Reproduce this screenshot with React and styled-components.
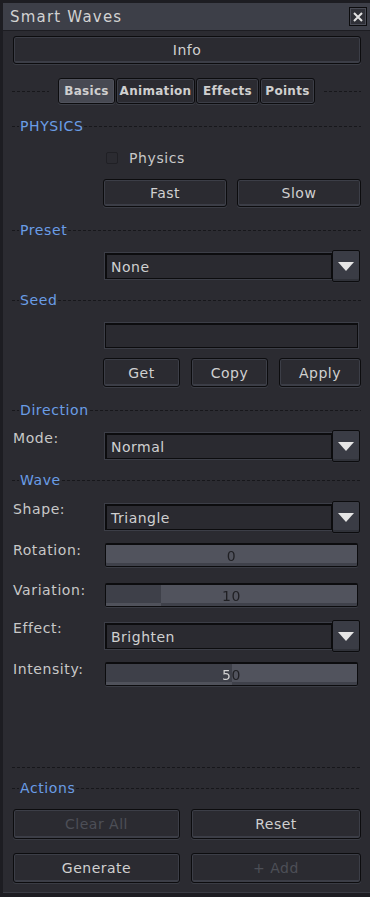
import styled, { createGlobalStyle } from 'styled-components';

const Global = createGlobalStyle`
  html, body {
    margin: 0;
    padding: 0;
    background: #1d1d22;
  }
  * { box-sizing: border-box; }
`;

const Window = styled.div`
  width: 370px;
  height: 897px;
  display: flex;
  flex-direction: column;
  background: #2b2b31;
  border-top: 3px solid #1d1d22;
  border-left: 3px solid #1d1d22;
  border-bottom: 4px solid #1d1d22;
  font-family: "DejaVu Sans", sans-serif;
  color: #cacaca;
  overflow: hidden;
`;

const TitleBar = styled.div`
  height: 28px;
  flex: none;
  display: flex;
  align-items: center;
  justify-content: space-between;
  padding: 0 3px 0 7px;
  background: #3d3f48;
  border-bottom: 1px solid #1d1d22;
`;

const Title = styled.span`
  font-size: 15px;
  letter-spacing: 1.2px;
  color: #d2d2d2;
`;

const Close = styled.button`
  width: 18px;
  height: 19px;
  padding: 0;
  display: grid;
  place-items: center;
  background: #2f3037;
  border: 1px solid #0c0c0e;
  box-shadow: inset 0 0 0 1px #4a4c56;
`;

const Body = styled.div`
  flex: 1;
  display: flex;
  flex-direction: column;
  padding: 5px 6px 0 9px;
  border-bottom: 1px solid #3a3c44;
`;

const Btn = styled.button`
  height: ${p => p.$h || 28}px;
  padding: 0;
  background: #2b2b31;
  border: 1px solid #0c0c0e;
  border-radius: 3px;
  box-shadow: inset 0 0 0 1px #3c3e47, inset 0 -2px 0 #3c3e47, 0 1px 0 #3a3c44;
  color: ${p => (p.disabled ? '#4d4f57' : '#d0d0d0')};
  font: 14px "DejaVu Sans", sans-serif;
  letter-spacing: 0.5px;
`;

const Tabs = styled.div`
  display: flex;
  align-items: center;
  gap: 9px;
  margin-top: 14px;
  margin-right: 3px;
`;

const Dash = styled.div`
  flex: 1;
  height: 1px;
  background-image: repeating-linear-gradient(to right, #17171b 0 3px, transparent 3px 5px);
`;

const TabGroup = styled.div`
  display: flex;
  gap: 1px;
`;

const Tab = styled.button`
  height: 26px;
  width: ${p => p.$w}px;
  padding: 0;
  background: ${p => (p.$active ? '#474952' : '#2b2b31')};
  border: 1px solid #0c0c0e;
  border-radius: 3px;
  box-shadow: inset 0 0 0 1px ${p => (p.$active ? '#50525c' : '#3c3e47')}, 0 1px 0 #3a3c44;
  color: #cfcfcf;
  font: bold 12px "DejaVu Sans", sans-serif;
  letter-spacing: 0.3px;
`;

const Header = styled.div`
  display: flex;
  align-items: center;
  gap: 1px;
  height: 16px;
  margin-top: ${p => p.$mt}px;
  margin-right: 3px;
  & > span {
    color: #6a9de6;
    font-size: 14px;
    letter-spacing: 0.6px;
  }
`;

const LeadDash = styled(Dash)`
  flex: none;
  width: 7px;
`;

const Row = styled.div`
  display: grid;
  grid-template-columns: 91px 1fr;
  align-items: start;
  margin-top: ${p => p.$mt}px;
  padding-right: ${p => p.$pr || 0}px;
`;

const Label = styled.span`
  font-size: 14px;
  letter-spacing: 0.6px;
  color: #c8c8c8;
  padding-left: 1px;
  margin-top: ${p => p.$pt || 0}px;
`;

const Pair = styled.div`
  display: grid;
  grid-template-columns: ${p => p.$cols};
  column-gap: ${p => p.$gap}px;
`;

const Check = styled.label`
  display: flex;
  align-items: center;
  gap: 11px;
  padding-left: 3px;
  font-size: 14px;
  letter-spacing: 0.6px;
  color: #c8c8c8;
`;

const Box = styled.span`
  width: 12px;
  height: 12px;
  border: 1px solid #202025;
  border-radius: 2px;
  background: #2b2b31;
`;

const Select = styled.div`
  display: flex;
  align-items: center;
  margin-left: 2px;
  margin-right: 4px;
`;

const Field = styled.div`
  flex: 1;
  height: 26px;
  display: flex;
  align-items: center;
  padding-left: 4px;
  background: #2a2a30;
  border: 1px solid #0c0c0e;
  border-left-width: 2px;
  border-top-width: 2px;
  outline: 1px solid #3c3e47;
  font-size: 14px;
  letter-spacing: 0.5px;
  color: #d0d0d0;
`;

const Arrow = styled.div`
  width: 28px;
  height: 32px;
  display: grid;
  place-items: center;
  background: #3a3c45;
  border: 1px solid #0c0c0e;
  border-radius: 2px;
  box-shadow: inset 0 -2px 0 #2f3138, 0 1px 0 #2f3037;
`;

const Input = styled.div`
  height: 25px;
  margin-left: 2px;
  margin-right: 6px;
  background: #2a2a30;
  border: 1px solid #0c0c0e;
  border-top-width: 2px;
  outline: 1px solid #3c3e47;
`;

const Slider = styled.div`
  position: relative;
  height: 24px;
  margin-left: 2px;
  margin-right: 6px;
  display: flex;
  background: #51535d;
  border: 1px solid #0c0c0e;
  border-top-width: 2px;
  border-radius: 2px;
  box-shadow: inset 0 -3px 0 #3f414a, 0 1px 0 #3a3c44;
  overflow: hidden;
`;

const Fill = styled.div`
  flex: none;
  height: 100%;
  background: #3e4049;
  box-shadow: inset 0 -3px 0 #50525b;
`;

const Value = styled.span`
  position: absolute;
  inset: 0;
  display: grid;
  place-items: center;
  padding-top: 1px;
  font-size: 14px;
  letter-spacing: 0.5px;
  color: transparent;
  background-clip: text;
  -webkit-background-clip: text;
`;

const Spacer = styled.div`
  flex: 1;
`;

const Bottom = styled.div`
  display: grid;
  grid-template-columns: 167px 1fr;
  gap: 14px 11px;
  margin-top: 13px;
  margin-bottom: 9px;
  padding-left: 1px;
  padding-right: 3px;
  & > button { height: 30px; }
`;

function Section({ title, mt }) {
  return (
    <Header $mt={mt}>
      <LeadDash />
      <span>{title}</span>
      <Dash />
    </Header>
  );
}

function Dropdown({ value }) {
  return (
    <Select>
      <Field>{value}</Field>
      <Arrow>
        <svg width='16' height='9' viewBox='0 0 16 9'>
          <path d='M0 0H16L8 9Z' fill='#e6e6e6' />
        </svg>
      </Arrow>
    </Select>
  );
}

function Range({ value, pct }) {
  return (
    <Slider>
      <Fill style={{ width: pct + '%' }} />
      <Value
        style={{
          backgroundImage: `linear-gradient(to right, #d4d4d4 ${pct}%, #1f1f23 ${pct}%)`,
        }}
      >
        {value}
      </Value>
    </Slider>
  );
}

export default function App() {
  return (
    <>
      <Global />
      <Window>
        <TitleBar>
          <Title>Smart Waves</Title>
          <Close>
            <svg width='10' height='10' viewBox='0 0 10 10'>
              <path d='M1 1L9 9M9 1L1 9' stroke='#e2e2e2' strokeWidth='2' />
            </svg>
          </Close>
        </TitleBar>
        <Body>
          <Btn style={{ marginRight: 3, marginLeft: 1 }}>Info</Btn>

          <Tabs>
            <Dash />
            <TabGroup>
              <Tab $w={57} $active>Basics</Tab>
              <Tab $w={79}>Animation</Tab>
              <Tab $w={63}>Effects</Tab>
              <Tab $w={55}>Points</Tab>
            </TabGroup>
            <Dash />
          </Tabs>

          <Section title='PHYSICS' mt={14} />
          <Row $mt={16}>
            <span />
            <Check>
              <Box />
              Physics
            </Check>
          </Row>
          <Row $mt={13} $pr={3}>
            <span />
            <Pair $cols='1fr 1fr' $gap={10}>
              <Btn>Fast</Btn>
              <Btn>Slow</Btn>
            </Pair>
          </Row>

          <Section title='Preset' mt={15} />
          <Row $mt={12}>
            <span />
            <Dropdown value='None' />
          </Row>

          <Section title='Seed' mt={10} />
          <Row $mt={15}>
            <span />
            <Input />
          </Row>
          <Row $mt={10} $pr={3}>
            <span />
            <Pair $cols='77px 77px 1fr' $gap={11}>
              <Btn $h={29}>Get</Btn>
              <Btn $h={29}>Copy</Btn>
              <Btn $h={29}>Apply</Btn>
            </Pair>
          </Row>

          <Section title='Direction' mt={15} />
          <Row $mt={12}>
            <Label>Mode:</Label>
            <Dropdown value='Normal' />
          </Row>

          <Section title='Wave' mt={10} />
          <Row $mt={13}>
            <Label>Shape:</Label>
            <Dropdown value='Triangle' />
          </Row>
          <Row $mt={10}>
            <Label $pt={-1}>Rotation:</Label>
            <Range value='0' pct={0} />
          </Row>
          <Row $mt={16}>
            <Label $pt={-1}>Variation:</Label>
            <Range value='10' pct={22} />
          </Row>
          <Row $mt={13}>
            <Label>Effect:</Label>
            <Dropdown value='Brighten' />
          </Row>
          <Row $mt={10}>
            <Label $pt={-1}>Intensity:</Label>
            <Range value='50' pct={50} />
          </Row>

          <Spacer />
          <Header $mt={0}>
            <Dash />
          </Header>
          <Section title='Actions' mt={5} />
          <Bottom>
            <Btn disabled>Clear All</Btn>
            <Btn>Reset</Btn>
            <Btn>Generate</Btn>
            <Btn disabled>+ Add</Btn>
          </Bottom>
        </Body>
      </Window>
    </>
  );
}
